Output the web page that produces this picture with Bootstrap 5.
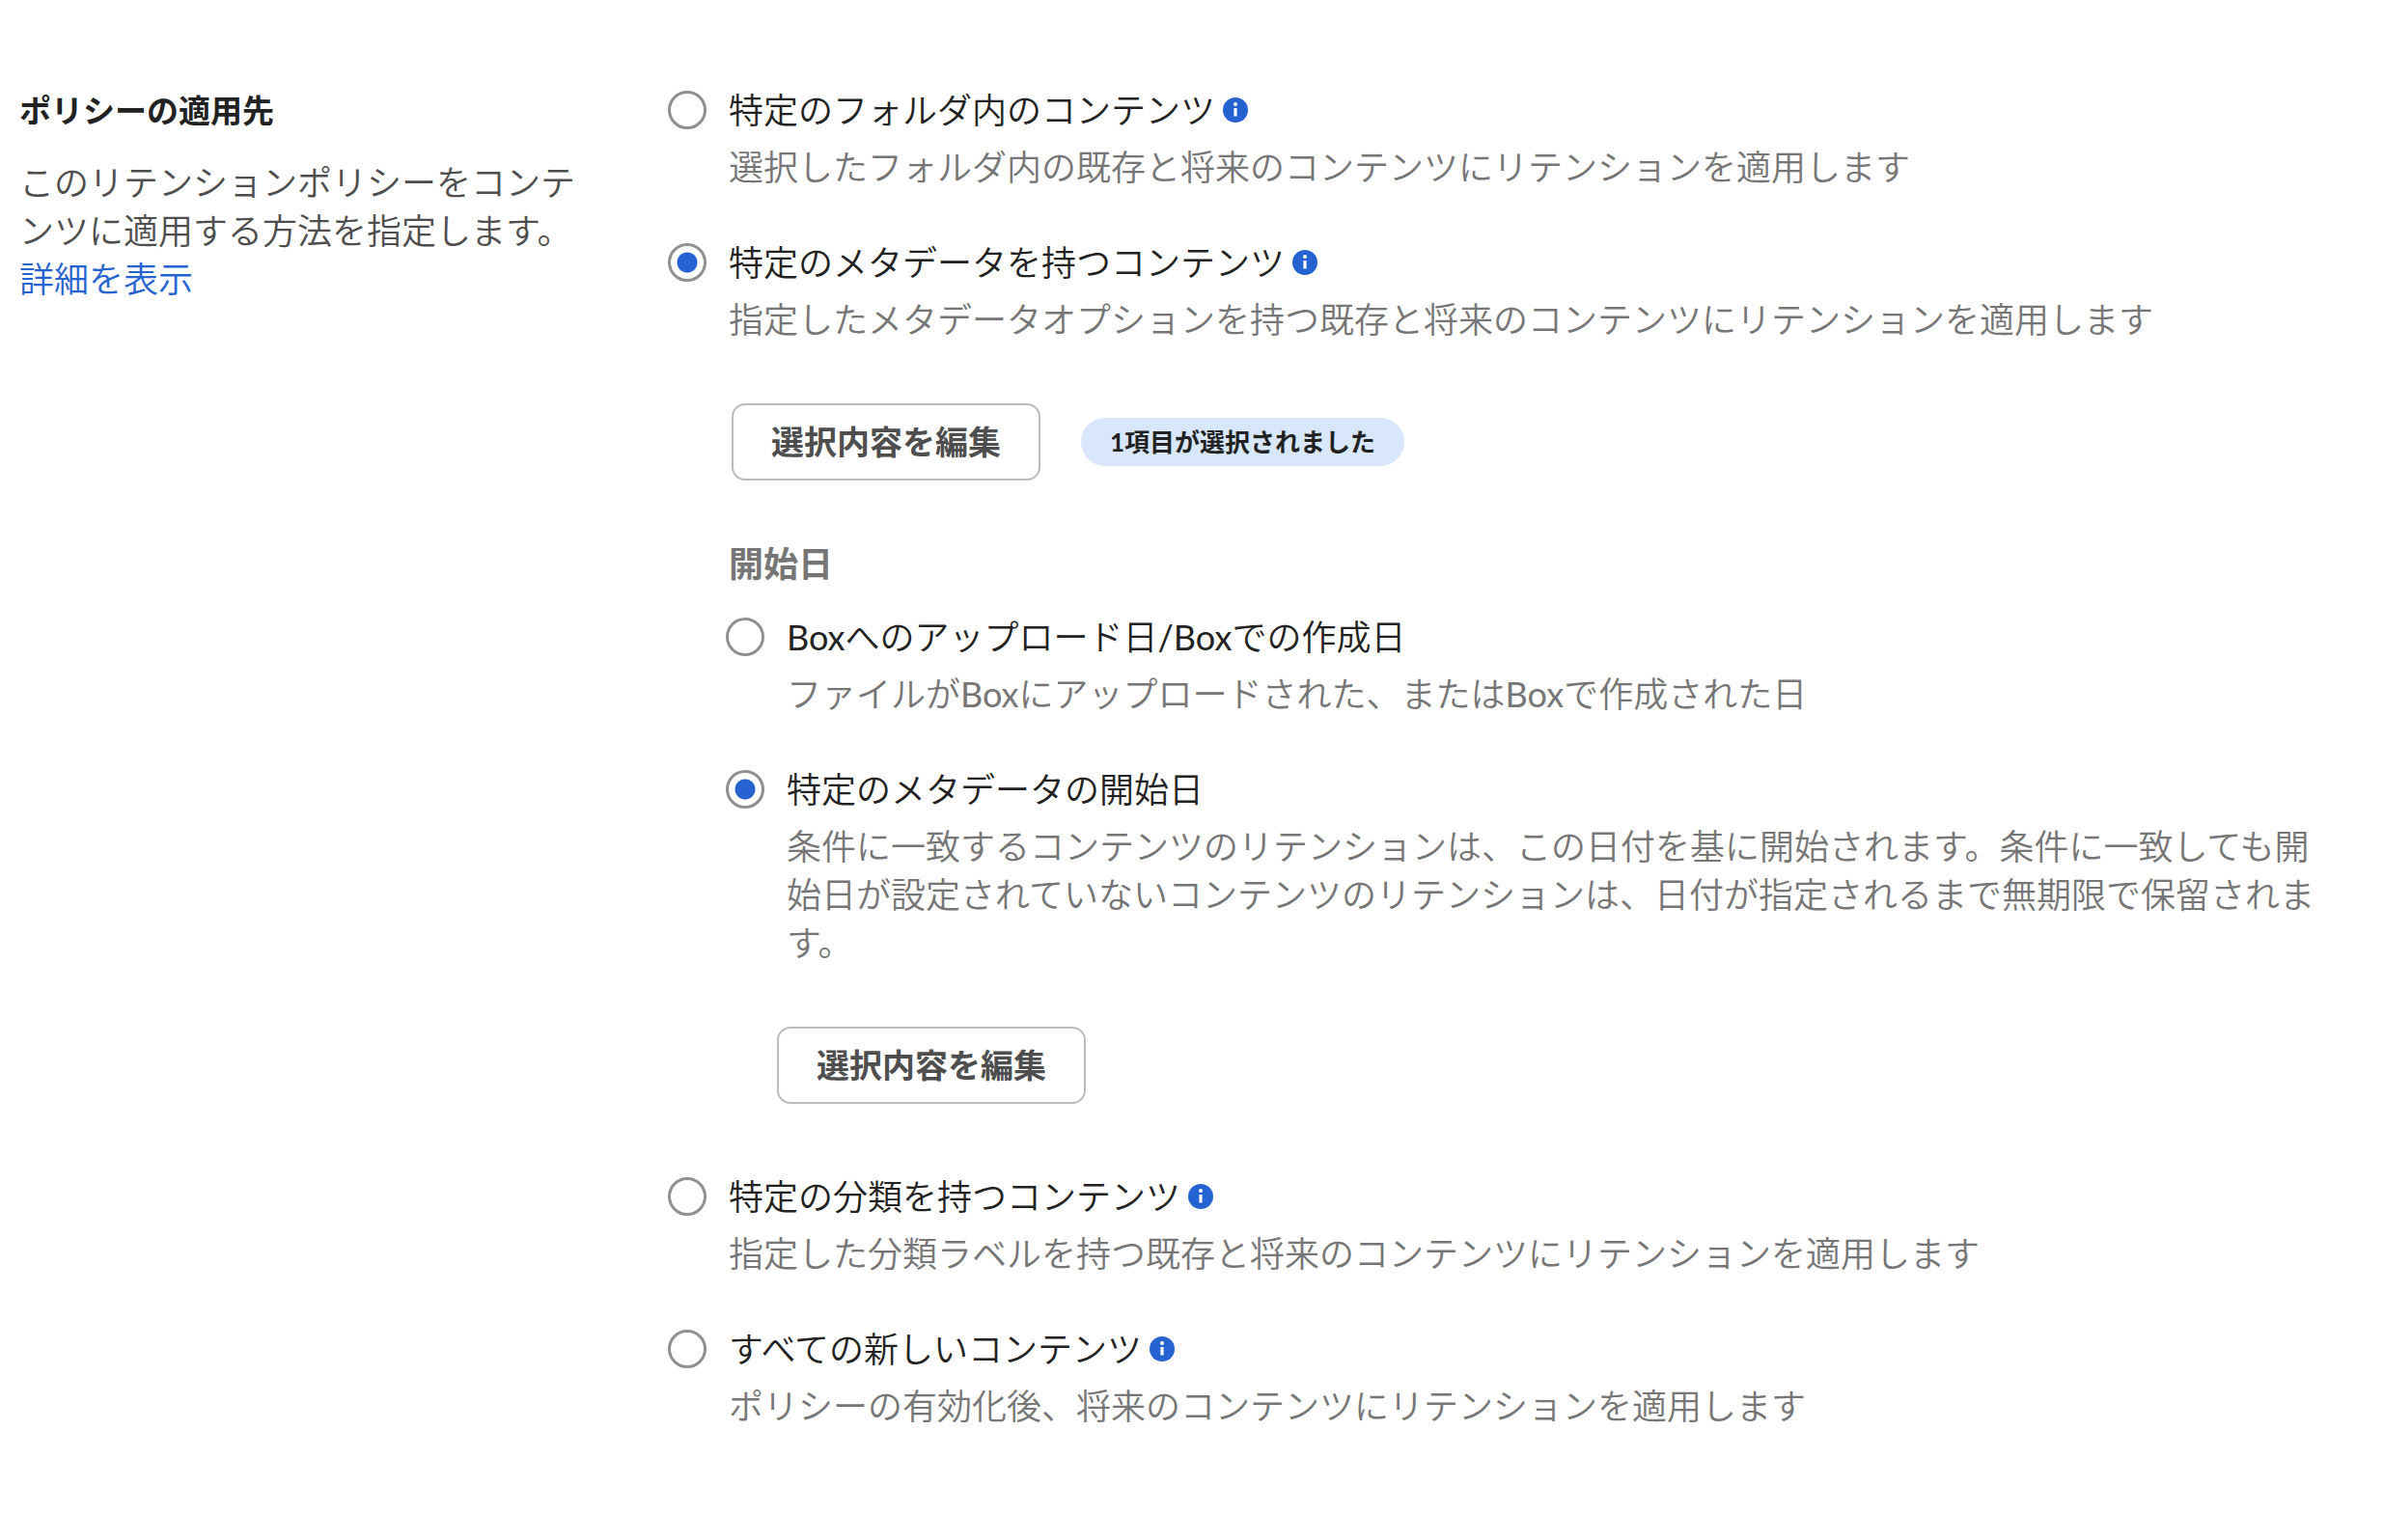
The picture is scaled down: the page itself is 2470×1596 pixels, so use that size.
<!DOCTYPE html>
<html lang="ja">
<head>
<meta charset="utf-8">
<meta name="viewport" content="width=device-width, initial-scale=1">
<title>ポリシーの適用先</title>
<link href="https://cdn.jsdelivr.net/npm/bootstrap@5.3.0/dist/css/bootstrap.min.css" rel="stylesheet">
<style>
  body { font-family: Lato, "Noto Sans CJK JP", sans-serif; font-size: 36px; font-weight: 350; line-height: 50px; color: #222; background: #fff; }
  .latin-regular { font-weight: 400; }
  .policy-form { display: grid; grid-template-columns: 28% minmax(0, 1fr); padding: 89px 50px 60px 20px; }
  .policy-intro { padding-right: 64px; color: #4e4e4e; }
  .policy-title { margin: 0 0 25px; font-size: 33px; line-height: 50px; font-weight: 700; color: #222; }
  .policy-intro a { color: #2563d1; text-decoration: none; }
  .option-list { display: grid; gap: 49px; }
  .option { display: flex; align-items: flex-start; gap: 23px; }
  .option .form-check-input { flex: none; width: 40px; height: 40px; margin: 5px 0 0; border: 3px solid #909090; background-color: #fff; }
  .option .form-check-input:checked { background-image: radial-gradient(circle, #2563d1 10px, transparent 11px); background-size: auto; }
  .option-body { flex: 1; min-width: 0; }
  .option-head { display: flex; align-items: center; gap: 8px; margin-bottom: 9px; }
  .option-help { margin: 0; color: #767676; }
  .info-btn { display: flex; padding: 0; border: 0; background: none; }
  .info-btn svg { width: 26px; height: 26px; }
  .edit-btn { --bs-btn-color: #4e4e4e; --bs-btn-border-color: #bcbcbc; --bs-btn-hover-color: #222; --bs-btn-hover-bg: #f4f4f4; --bs-btn-hover-border-color: #bcbcbc; --bs-btn-border-width: 2px; --bs-btn-border-radius: 14px; --bs-btn-padding-x: 39px; --bs-btn-padding-y: 13px; --bs-btn-font-size: 34px; --bs-btn-line-height: 50px; --bs-btn-font-weight: 700; background: #fff; }
  .count-pill { padding: 0 30px; font-size: 26px; line-height: 50px; font-weight: 700; color: #222; background: #d8e7fc; }
  .edit-row { display: flex; align-items: center; gap: 42px; margin: 62px 0 0 3px; }
  .start-date { margin: 61px 0 0 -3px; padding: 0; border: 0; min-width: 0; }
  .start-date legend { float: none; margin: 0 0 26px; padding-left: 3px; font-size: 36px; line-height: 50px; font-weight: 700; color: #767676; }
  .start-date .edit-row { margin-left: -10px; }
  .after-nested { margin-top: 22px; }
</style>
</head>
<body>
<svg class="d-none" xmlns="http://www.w3.org/2000/svg">
  <symbol id="info" viewBox="0 0 26 26">
    <circle cx="13" cy="13" r="13" fill="#2563d1"/>
    <circle cx="13" cy="7" r="2" fill="#fff"/>
    <path d="M11.4 11h3.2v8.5h-3.2z" fill="#fff"/>
  </symbol>
</svg>
<main class="policy-form">
  <section class="policy-intro">
    <h1 class="policy-title">ポリシーの適用先</h1>
    <p class="mb-0">このリテンションポリシーをコンテンツに適用する方法を指定します。<br><a href="#">詳細を表示</a></p>
  </section>
  <form class="option-list">
    <div class="option">
      <input class="form-check-input" type="radio" name="target" id="t-folder" aria-describedby="h-folder">
      <div class="option-body">
        <div class="option-head"><label for="t-folder">特定のフォルダ内のコンテンツ</label><button class="info-btn" type="button" aria-label="情報"><svg aria-hidden="true"><use href="#info"/></svg></button></div>
        <p class="option-help" id="h-folder">選択したフォルダ内の既存と将来のコンテンツにリテンションを適用します</p>
      </div>
    </div>
    <div class="option">
      <input class="form-check-input" type="radio" name="target" id="t-meta" aria-describedby="h-meta" checked>
      <div class="option-body">
        <div class="option-head"><label for="t-meta">特定のメタデータを持つコンテンツ</label><button class="info-btn" type="button" aria-label="情報"><svg aria-hidden="true"><use href="#info"/></svg></button></div>
        <p class="option-help" id="h-meta">指定したメタデータオプションを持つ既存と将来のコンテンツにリテンションを適用します</p>
        <div class="edit-row">
          <button class="btn edit-btn" type="button">選択内容を編集</button>
          <span class="count-pill rounded-pill">1項目が選択されました</span>
        </div>
        <fieldset class="start-date">
          <legend>開始日</legend>
          <div class="option-list">
            <div class="option">
              <input class="form-check-input" type="radio" name="start" id="s-upload" aria-describedby="h-upload">
              <div class="option-body">
                <div class="option-head"><label for="s-upload"><span class="latin-regular">Box</span>へのアップロード日<span class="latin-regular">/Box</span>での作成日</label></div>
                <p class="option-help" id="h-upload">ファイルが<span class="latin-regular">Box</span>にアップロードされた、または<span class="latin-regular">Box</span>で作成された日</p>
              </div>
            </div>
            <div class="option">
              <input class="form-check-input" type="radio" name="start" id="s-meta" aria-describedby="h-start" checked>
              <div class="option-body">
                <div class="option-head"><label for="s-meta">特定のメタデータの開始日</label></div>
                <p class="option-help" id="h-start">条件に一致するコンテンツのリテンションは、この日付を基に開始されます。条件に一致しても開始日が設定されていないコンテンツのリテンションは、日付が指定されるまで無期限で保留されます。</p>
                <div class="edit-row"><button class="btn edit-btn" type="button">選択内容を編集</button></div>
              </div>
            </div>
          </div>
        </fieldset>
      </div>
    </div>
    <div class="option after-nested">
      <input class="form-check-input" type="radio" name="target" id="t-class" aria-describedby="h-class">
      <div class="option-body">
        <div class="option-head"><label for="t-class">特定の分類を持つコンテンツ</label><button class="info-btn" type="button" aria-label="情報"><svg aria-hidden="true"><use href="#info"/></svg></button></div>
        <p class="option-help" id="h-class">指定した分類ラベルを持つ既存と将来のコンテンツにリテンションを適用します</p>
      </div>
    </div>
    <div class="option">
      <input class="form-check-input" type="radio" name="target" id="t-all" aria-describedby="h-all">
      <div class="option-body">
        <div class="option-head"><label for="t-all">すべての新しいコンテンツ</label><button class="info-btn" type="button" aria-label="情報"><svg aria-hidden="true"><use href="#info"/></svg></button></div>
        <p class="option-help" id="h-all">ポリシーの有効化後、将来のコンテンツにリテンションを適用します</p>
      </div>
    </div>
  </form>
</main>
<script src="https://cdn.jsdelivr.net/npm/bootstrap@5.3.0/dist/js/bootstrap.bundle.min.js"></script>
</body>
</html>
